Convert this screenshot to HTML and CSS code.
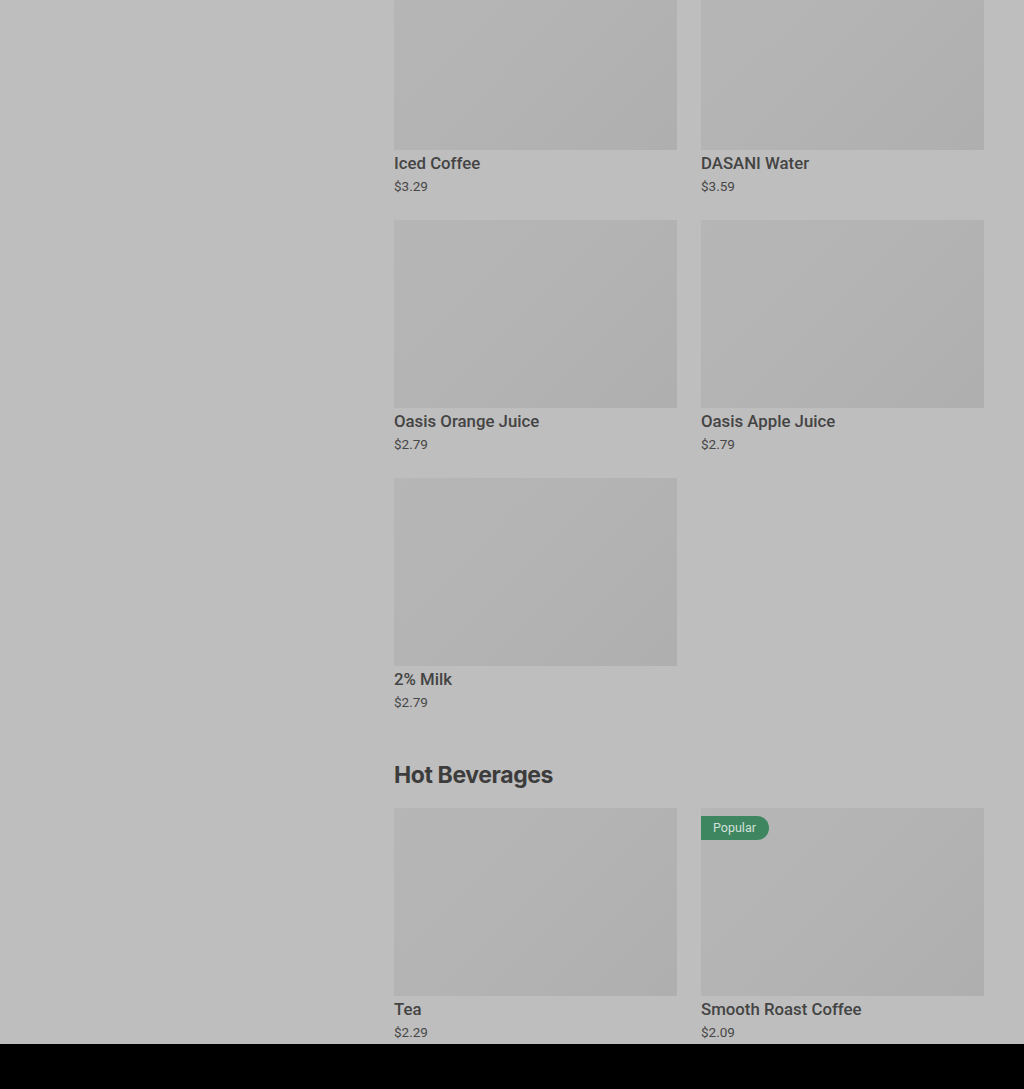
FILE: index.html
```html
<!DOCTYPE html>
<html lang="en">
<head>
<meta charset="utf-8">
<title>Menu</title>
<link rel="stylesheet" href="styles.css">
</head>
<body>
<div class="page">
  <aside class="side"></aside>
  <main class="menu">
    <section class="section first">
      <div class="grid">
        <div class="item"><div class="pic"></div><div class="name">Iced Coffee</div><div class="price">$3.29</div></div>
        <div class="item"><div class="pic"></div><div class="name">DASANI Water</div><div class="price">$3.59</div></div>
        <div class="item"><div class="pic"></div><div class="name">Oasis Orange Juice</div><div class="price">$2.79</div></div>
        <div class="item"><div class="pic"></div><div class="name">Oasis Apple Juice</div><div class="price">$2.79</div></div>
        <div class="item"><div class="pic"></div><div class="name">2% Milk</div><div class="price">$2.79</div></div>
      </div>
    </section>
    <section class="section">
      <h2 class="heading">Hot Beverages</h2>
      <div class="grid">
        <div class="item"><div class="pic"></div><div class="name">Tea</div><div class="price">$2.29</div></div>
        <div class="item"><div class="pic"><span class="badge">Popular</span></div><div class="name">Smooth Roast Coffee</div><div class="price">$2.09</div></div>
      </div>
    </section>
  </main>
</div>
<div class="bottombar"></div>
</body>
</html>
```
FILE: styles.css
```css
html, body {
  margin: 0;
  padding: 0;
  background: #bebebe;
  height: 100%;
  overflow: hidden;
}
body {
  font-family: Roboto, "Liberation Sans", sans-serif;
  color: #404040;
}
.page {
  display: flex;
  padding-right: 40px;
}
.side {
  width: 394px;
  flex-shrink: 0;
}
.menu {
  flex: 1;
}
.section.first {
  margin-top: -38px;
}
.grid {
  display: grid;
  grid-template-columns: 283px 283px;
  column-gap: 24px;
  row-gap: 24px;
}
.item {
  display: flex;
  flex-direction: column;
}
.pic {
  position: relative;
  height: 188px;
  background: linear-gradient(135deg, #b6b6b6 0%, #b3b3b3 50%, #afafaf 100%);
}
.name {
  margin-top: 1px;
  font-size: 16.8px;
  font-weight: 500;
  line-height: 24px;
  color: #444444;
}
.price {
  margin-top: 1px;
  font-size: 13.5px;
  line-height: 20px;
  color: #474747;
}
.heading {
  margin: 47px 0 17px;
  font-family: Inter, Roboto, sans-serif;
  font-size: 23px;
  font-weight: 700;
  letter-spacing: -0.4px;
  line-height: 32px;
  color: #3c3c3c;
}
.badge {
  position: absolute;
  left: 0;
  top: 8px;
  height: 24px;
  line-height: 24px;
  padding: 0 13px 0 12px;
  background: #3d8660;
  color: #d3e0d9;
  font-size: 12.5px;
  border-radius: 0 12px 12px 0;
}
.bottombar {
  position: fixed;
  left: 0;
  right: 0;
  bottom: 0;
  height: 45px;
  background: #000;
}
```
